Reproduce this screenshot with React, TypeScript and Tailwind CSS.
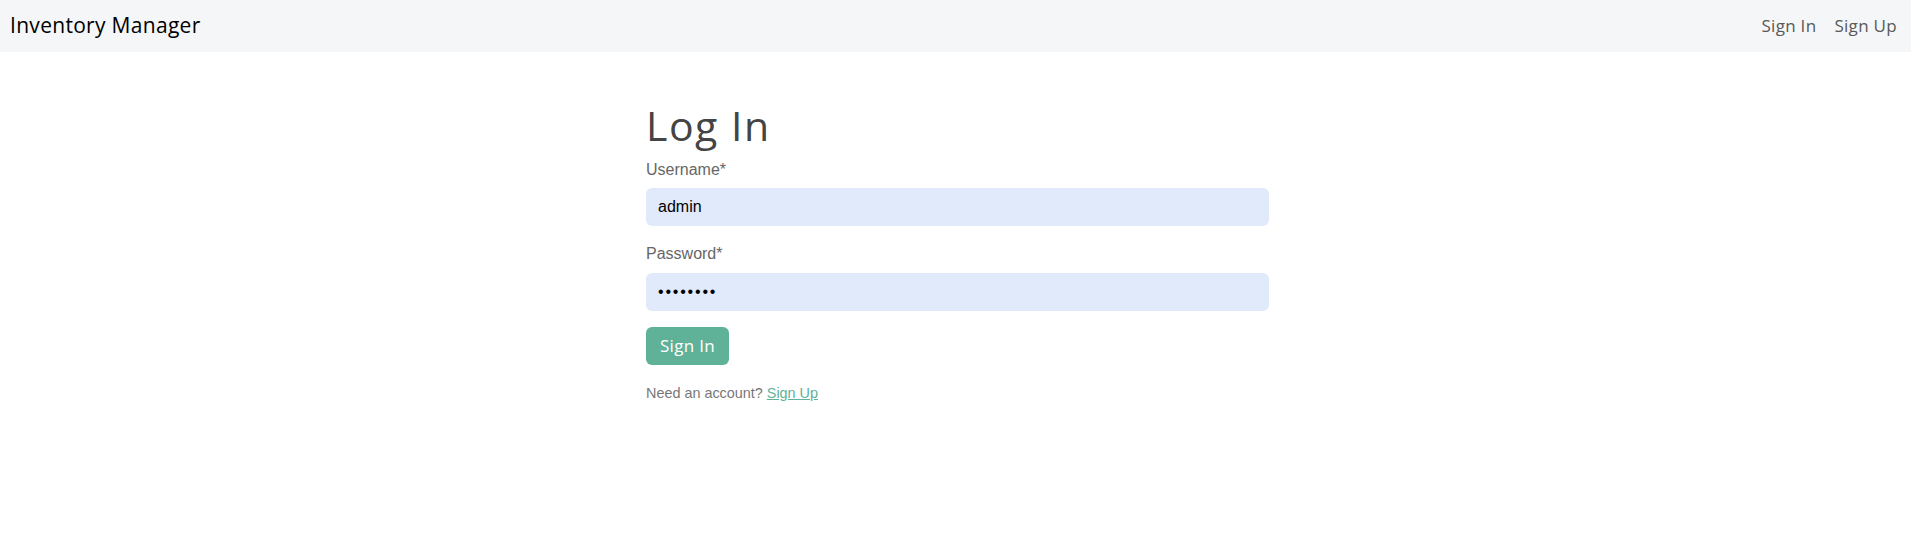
import React, { useState } from 'react';

const App: React.FC = () => {
  const [username, setUsername] = useState('admin');
  const [password, setPassword] = useState('password');

  return (
    <div className="min-h-[536px] bg-white">
      <nav className="h-[52px] bg-[#f5f6f8] flex items-center justify-between pl-[10px] pr-[14px]">
        <span className="text-[21px] text-black font-['Open_Sans',sans-serif] tracking-[0.3px]">Inventory Manager</span>
        <div className="flex items-center gap-[18px] text-[17px] tracking-[0.3px] text-[#595959] font-['Open_Sans',sans-serif]">
          <a href="#">Sign In</a>
          <a href="#">Sign Up</a>
        </div>
      </nav>

      <div className="flex justify-center pl-[4px]">
        <div className="w-[623px] pt-[49px] font-['Liberation_Sans',Arial,sans-serif]">
          <h1 className="text-[41px] leading-[48px] tracking-[1.5px] text-[#444] font-['Open_Sans',sans-serif] mb-[9px]">Log In</h1>

          <form className="flex flex-col">
            <label className="text-[16px] leading-[24px] text-[#666] mb-[6px]">Username*</label>
            <input
              value={username}
              onChange={e => setUsername(e.target.value)}
              className="h-[38px] rounded-[6px] bg-[#e0eafb] px-[12px] text-[16px] text-black outline-none"
            />

            <label className="text-[16px] leading-[24px] text-[#666] mt-[16px] mb-[7px]">Password*</label>
            <input
              type="password"
              value={password}
              onChange={e => setPassword(e.target.value)}
              className="h-[38px] rounded-[6px] bg-[#e0eafb] px-[12px] text-[16px] tracking-[1.8px] text-black outline-none"
            />

            <button
              type="button"
              className="mt-[16px] self-start h-[38px] px-[14px] rounded-[6px] bg-[#5fb197] text-white text-[17px] tracking-[0.3px] font-['Open_Sans',sans-serif]"
            >
              Sign In
            </button>

            <p className="mt-[18px] text-[14.4px] text-[#777]">
              Need an account? <a href="#" className="text-[#5fb197] underline">Sign Up</a>
            </p>
          </form>
        </div>
      </div>
    </div>
  );
};

export default App;
